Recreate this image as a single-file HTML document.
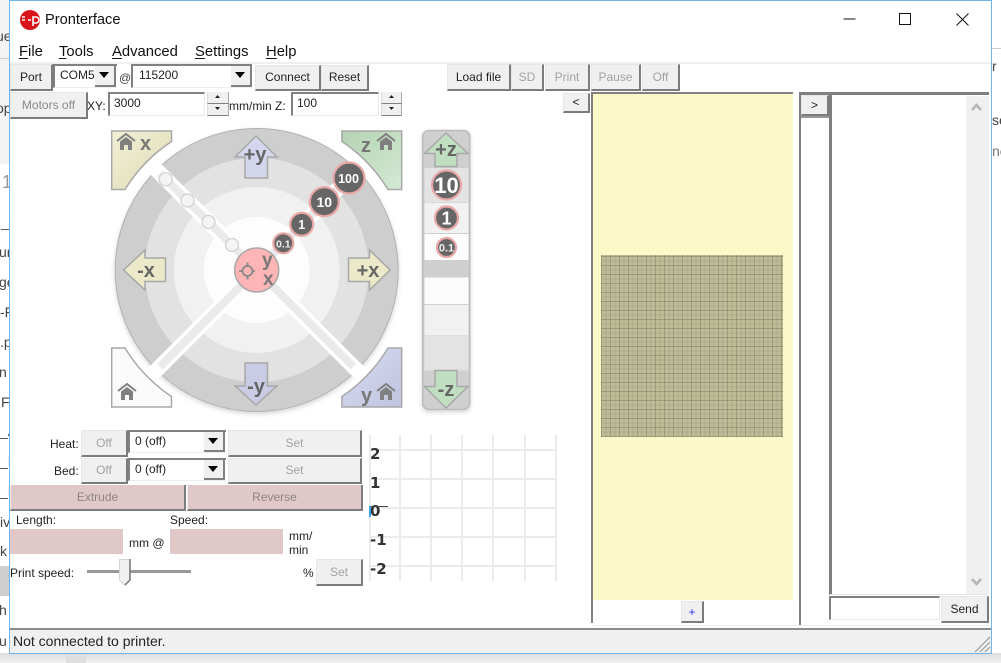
<!DOCTYPE html>
<html><head><meta charset="utf-8"><style>
html,body{margin:0;padding:0;width:1001px;height:663px;overflow:hidden;background:#f2f2f2}
body{position:relative;font:12px "Liberation Sans",sans-serif;color:#222}
div,span{position:absolute;box-sizing:border-box}
.t{white-space:nowrap;line-height:14px}
.o{font-size:14px;color:#444;white-space:nowrap;line-height:16px}
.m{font-size:14.8px;color:#111;white-space:nowrap;line-height:18px}
.m u{text-decoration:underline;text-underline-offset:2px}
.b{background:#f0f0f0;border:1px solid #e6e6e6;border-right:2px solid #7c7c7c;border-bottom:2px solid #7c7c7c;text-align:center;white-space:nowrap;color:#222;font-size:12px}
.d{color:#a2a2a2}
.c{background:#fff;border-top:2px solid #808080;border-left:2px solid #808080;border-bottom:1px solid #eee;font-size:12px;padding:2px 0 0 5px;white-space:nowrap;line-height:14px}
.a{background:#f0f0f0;border-right:2px solid #808080;border-bottom:2px solid #808080}
.a:after{content:"";position:absolute;left:4px;top:6px;border:5px solid transparent;border-top:6px solid #000;border-bottom:0}
.i{background:#fff;border-top:2px solid #808080;border-left:2px solid #808080;border-right:1px solid #e8e8e8;border-bottom:1px solid #e8e8e8;font-size:12px;padding:2px 0 0 4px;line-height:14px}
.s{background:#f0f0f0;border-right:1px solid #aaa;border-bottom:1px solid #808080;border-left:1px solid #ddd}
.r{background:#e0c8c8;border-right:2px solid #7c7c7c;border-bottom:2px solid #7c7c7c;border-left:1px solid #eee;color:#8f8484;text-align:center;font-size:12px;line-height:24px}
.p{background:#e0c8c8}
.gv{background:#ebebeb;width:1.5px;top:435px;height:146px}
.gh{background:#ebebeb;height:1.5px;left:369px;width:187px}
.g{font:bold 15px "DejaVu Sans",sans-serif;color:#333;line-height:16px;white-space:nowrap}
</style></head><body>
<div style="left:0;top:0;width:1001px;height:663px;filter:blur(.3px)">
<div style="left:0;top:0;width:10px;height:653px;background:#f3f3f3"></div>
<div style="left:0;top:58px;width:10px;height:1px;background:#ccc"></div>
<div style="left:0;top:164px;width:10px;height:499px;background:#fff"></div>
<div style="left:0;top:566px;width:10px;height:30px;background:#cfcfcf"></div>
<div style="left:991px;top:0;width:10px;height:663px;background:#fff"></div>
<div style="left:991px;top:48px;width:10px;height:1px;background:#ccc"></div>
<div style="left:0;top:653px;width:1001px;height:10px;background:linear-gradient(#dcdcdc,#f2f2f2)"></div>
<div style="left:66px;top:653px;width:20px;height:10px;background:#dedede"></div>
<div class="o" style="left:-4px;top:28px;width:14px;overflow:hidden">ue</div>
<div class="o" style="left:-4px;top:100px;width:14px;overflow:hidden">op</div>
<div class="o" style="left:2px;top:174px;font-size:18px;color:#999">1</div>
<div style="left:0;top:0;width:10px;height:653px;overflow:hidden">
<div class="o" style="left:1px;top:214px">_t</div><div class="o" style="left:-1px;top:244px">ur</div><div class="o" style="left:-1px;top:274px">ge</div><div class="o" style="left:0;top:304px">-F</div><div class="o" style="left:0;top:334px">.p</div><div class="o" style="left:-1px;top:364px">n</div><div class="o" style="left:1px;top:394px">Fi</div><div class="o" style="left:0;top:423px">_A</div><div class="o" style="left:0;top:453px">_D</div><div class="o" style="left:0;top:483px">_D</div><div class="o" style="left:0;top:514px">iv</div><div class="o" style="left:0;top:543px">k</div><div class="o" style="left:-1px;top:602px">h</div><div class="o" style="left:-1px;top:633px">u</div></div>
<div class="o" style="left:992px;top:58px">r</div><div class="o" style="left:992px;top:112px">sé</div><div class="o" style="left:992px;top:143px;color:#777">ne</div>

<!-- window -->
<div style="left:9px;top:0;width:983px;height:654px;background:#fff;border:1px solid #6db5ec"></div>
<svg style="position:absolute;left:19px;top:9px" width="22" height="22" viewBox="0 0 22 22"><circle cx="11" cy="11" r="10" fill="#d8131b"/><path d="M3 8h3M3 11h3M9 11h3" stroke="#fff" stroke-width="1.400"/><path d="M14 17V8h3a2.500 2.500 0 010 6h-3" fill="none" stroke="#fff" stroke-width="1.600"/></svg>
<div class="t" style="left:45px;top:11px;font-size:14.6px;line-height:18px;color:#111">Pronterface</div>
<svg style="position:absolute;left:840px;top:8px" width="135" height="22"><path d="M3.500 11h12" stroke="#111" fill="none"/><rect x="59.500" y="5.500" width="11" height="11" fill="none" stroke="#111"/><path d="M116.500 5.500l12 12M128.500 5.500l-12 12" stroke="#111" fill="none"/></svg>
<div class="m" style="left:19px;top:43px"><u>F</u>ile</div>
<div class="m" style="left:59px;top:43px"><u>T</u>ools</div>
<div class="m" style="left:112px;top:43px"><u>A</u>dvanced</div>
<div class="m" style="left:195px;top:43px"><u>S</u>ettings</div>
<div class="m" style="left:266px;top:43px"><u>H</u>elp</div>
<div style="left:10px;top:62px;width:981px;height:2px;background:#f0f0f0"></div>

<!-- top rows -->
<div class="b" style="left:10px;top:64px;width:43px;height:27px;line-height:25px">Port</div>
<div class="c" style="left:53px;top:64px;width:64px;height:24px;padding-left:5px;overflow:hidden">COM5</div>
<div class="a" style="left:95px;top:66px;width:21px;height:21px"></div>
<div class="t" style="left:119px;top:71px;color:#444">@</div>
<div class="c" style="left:131px;top:64px;width:121px;height:24px;padding-left:6px">115200</div>
<div class="a" style="left:231px;top:66px;width:21px;height:21px"></div>
<div class="b" style="left:255px;top:65px;width:66px;height:26px;line-height:23px">Connect</div>
<div class="b" style="left:321px;top:65px;width:48px;height:26px;line-height:23px">Reset</div>
<div class="b d" style="left:10px;top:92px;width:78px;height:27px;line-height:25px;color:#8a8a8a">Motors off</div>
<div class="t" style="left:87px;top:99px">XY:</div>
<div class="i" style="left:108px;top:92px;width:97px;height:24px">3000</div>
<div class="s" style="left:207px;top:92px;width:22px;height:12px"><svg width="20" height="10" style="position:absolute;left:0;top:0"><path d="M7 6h5l-2.500-3z" fill="#222"/></svg></div>
<div class="s" style="left:207px;top:104px;width:22px;height:12px"><svg width="20" height="10" style="position:absolute;left:0;top:0"><path d="M7 3h5l-2.500 3z" fill="#222"/></svg></div>
<div class="t" style="left:229px;top:99px">mm/min Z:</div>
<div class="i" style="left:291px;top:92px;width:88px;height:24px">100</div>
<div class="s" style="left:381px;top:92px;width:21px;height:12px"><svg width="20" height="10" style="position:absolute;left:0;top:0"><path d="M7 6h5l-2.500-3z" fill="#222"/></svg></div>
<div class="s" style="left:381px;top:104px;width:21px;height:12px"><svg width="20" height="10" style="position:absolute;left:0;top:0"><path d="M7 3h5l-2.500 3z" fill="#222"/></svg></div>

<div class="b" style="left:447px;top:64px;width:64px;height:27px;line-height:25px">Load file</div>
<div class="b d" style="left:511px;top:64px;width:33px;height:27px;line-height:25px">SD</div>
<div class="b d" style="left:545px;top:64px;width:45px;height:27px;line-height:25px">Print</div>
<div class="b d" style="left:591px;top:64px;width:50px;height:27px;line-height:25px">Pause</div>
<div class="b d" style="left:642px;top:64px;width:38px;height:27px;line-height:25px">Off</div>
<div class="b" style="left:563px;top:93px;width:27px;height:20px;line-height:17px">&lt;</div>

<!-- jog -->
<svg style="position:absolute;left:100px;top:120px" width="380" height="300" viewBox="100 120 380 300" font-family="'Liberation Sans',sans-serif" font-weight="bold">
<defs>
<filter id="sh" x="-20%" y="-20%" width="140%" height="140%"><feDropShadow dx="0" dy="2" stdDeviation="2.500" flood-color="#000" flood-opacity=".16"/></filter>
<linearGradient id="tl" x1="0" y1="0" x2="1" y2="1"><stop offset="0" stop-color="#f2f0d6"/><stop offset="1" stop-color="#dedbb5"/></linearGradient>
<linearGradient id="tr" x1="0" y1="0" x2="1" y2="1"><stop offset="0" stop-color="#b4d3b2"/><stop offset="1" stop-color="#d4ead4"/></linearGradient>
<linearGradient id="br" x1="0" y1="0" x2="1" y2="1"><stop offset="0" stop-color="#d8dcf2"/><stop offset="1" stop-color="#bfc3de"/></linearGradient>
<g id="h"><path d="M0 7L9 0l9 7" fill="none" stroke="#808080" stroke-width="2"/><path d="M3 7.500L9 3l6 4.500V16h-4v-5H7v5H3z" fill="#808080"/></g>
</defs>
<g filter="url(#sh)">
<circle cx="256.700" cy="270" r="141.500" fill="#cecece" stroke="#b2b2b2" stroke-width="1"/>
<circle cx="256.700" cy="270" r="112" fill="#e2e2e2"/>
<circle cx="256.700" cy="270" r="83" fill="#f1f1f1"/>
<circle cx="256.700" cy="270" r="53" fill="#fdfdfd"/>
</g>
<path d="M152 165.300L361.400 374.700M361.400 165.300L152 374.700" stroke="#fff" stroke-width="15"/>
<path d="M160 173.300L353.400 366.700M353.400 173.300L160 366.700" stroke="#eaeaea" stroke-width="8"/>
<g fill="#f4f4f4" stroke="#cfcfcf" stroke-width="1.200"><circle cx="165.700" cy="179.300" r="6.500"/><circle cx="187.500" cy="200.500" r="6.500"/><circle cx="208.500" cy="222" r="6.500"/><circle cx="232" cy="245" r="6.500"/></g>
<!-- corners -->
<g stroke="#a8a8a8" stroke-width="1.500">
<path d="M111.700 131H171.500V141.500A154 154 0 0 0 125 189.500H111.700Z" fill="url(#tl)"/>
<path d="M401.700 131H341.900V141.500A154 154 0 0 1 388 189.500H401.700Z" fill="url(#tr)"/>
<path d="M111.700 348H125A154 154 0 0 0 171.500 396.500V407H111.700Z" fill="#fbfbfb"/>
<path d="M401.700 348H388A154 154 0 0 1 341.900 396.500V407H401.700Z" fill="url(#br)"/>
</g>
<use href="#h" x="117" y="134"/><use href="#h" x="377" y="134"/><use href="#h" x="118" y="384"/><use href="#h" x="377" y="384"/>
<g fill="#777" font-size="20"><text x="140" y="150">x</text><text x="361" y="152">z</text><text x="361" y="402">y</text></g>
<!-- arrows -->
<g stroke="#a8a8a8" stroke-width="1.500">
<path d="M256 136L277 157H267.500V178H245V157H235Z" fill="#d3d6ec"/>
<path d="M256 405L277 386H267.500V363H245V386H235Z" fill="#c9cce4"/>
<path d="M123.500 270L145 250V258H165.500V281.500H145V290Z" fill="#ece9c8"/>
<path d="M390 270L369.500 250V258H348.500V281.500H369.500V290Z" fill="#ece9c8"/>
</g>
<g fill="#666" text-anchor="middle" font-size="20"><text x="255" y="161">+y</text><text x="256" y="393">-y</text><text x="146" y="277">-x</text><text x="368" y="277">+x</text></g>
<!-- center -->
<circle cx="256.700" cy="270" r="22" fill="#fdb5b5" stroke="#a9a9a9" stroke-width="1.500"/>
<g stroke="#888" stroke-width="1.800" fill="none"><circle cx="247.500" cy="271" r="5"/><path d="M247.500 262.500v4M247.500 275.500v4M239 271h4M252 271h3"/></g>
<text x="262" y="266" fill="#777" font-size="19">y</text><text x="263" y="285" fill="#777" font-size="19">x</text>
<!-- steps -->
<g fill="#666" stroke="#e9a8a8" stroke-width="2.200"><circle cx="349" cy="178" r="15.500"/><circle cx="324.300" cy="201.700" r="14.500"/><circle cx="301.700" cy="224.300" r="11.500"/><circle cx="283.300" cy="243.300" r="10"/></g>
<g fill="#fff" text-anchor="middle"><text x="348.500" y="183" font-size="12.500">100</text><text x="324.300" y="207" font-size="14">10</text><text x="301.700" y="229" font-size="12.500">1</text><text x="283.300" y="247.500" font-size="10.500" fill="#f0f0f0">0.1</text></g>
<!-- z -->
<rect x="422.700" y="130.500" width="47" height="279" rx="6" fill="#cfcfcf" stroke="#bcbcbc" stroke-width="1.500" filter="url(#sh)"/>
<rect x="424.500" y="168" width="44" height="34.500" fill="#e3e3e3"/>
<rect x="424.500" y="203" width="44" height="30" fill="#f1f1f1"/>
<rect x="424.500" y="234" width="44" height="26" fill="#fdfdfd"/>
<rect x="424.500" y="277.500" width="44" height="26.500" fill="#fcfcfc"/>
<rect x="424.500" y="305" width="44" height="30.500" fill="#f1f1f1"/>
<rect x="424.500" y="336" width="44" height="34.500" fill="#e3e3e3"/>
<g stroke="#a8a8a8" stroke-width="1.500" fill="#c0dfc0">
<path d="M446 133L468 153.500H457V166.500H435V153.500H424.500Z"/>
<path d="M446 408L468 386.500H457V370.500H435V386.500H424.500Z"/>
</g>
<g fill="#666" text-anchor="middle" font-size="20"><text x="446" y="156">+z</text><text x="446" y="396">-z</text></g>
<g fill="#666" stroke="#e9a8a8" stroke-width="2.200"><circle cx="446.500" cy="185" r="14.500"/><circle cx="446.500" cy="218" r="11.500"/><circle cx="446.500" cy="247.500" r="9.500"/></g>
<g fill="#fff" text-anchor="middle"><text x="446.500" y="193" font-size="22">10</text><text x="446.500" y="224.500" font-size="18">1</text><text x="446.500" y="251.500" font-size="11" fill="#eee">0.1</text></g>
</svg>

<!-- temps -->
<div class="t" style="left:50px;top:437px">Heat:</div>
<div class="b d" style="left:81px;top:430px;width:47px;height:27px;line-height:24px">Off</div>
<div class="c" style="left:128px;top:430px;width:98px;height:23px;padding-left:5px">0 (off)</div>
<div class="a" style="left:204px;top:432px;width:21px;height:20px"></div>
<div class="b d" style="left:228px;top:430px;width:134px;height:27px;line-height:24px">Set</div>
<div class="t" style="left:54px;top:464px">Bed:</div>
<div class="b d" style="left:81px;top:458px;width:47px;height:26px;line-height:23px">Off</div>
<div class="c" style="left:128px;top:458px;width:98px;height:23px;padding-left:5px">0 (off)</div>
<div class="a" style="left:204px;top:460px;width:21px;height:20px"></div>
<div class="b d" style="left:228px;top:458px;width:134px;height:26px;line-height:23px">Set</div>
<div class="r" style="left:10px;top:485px;width:176px;height:26px">Extrude</div>
<div class="r" style="left:187px;top:485px;width:176px;height:26px">Reverse</div>
<div class="t" style="left:16px;top:513px">Length:</div>
<div class="t" style="left:170px;top:513px">Speed:</div>
<div class="p" style="left:10px;top:529px;width:113px;height:25px"></div>
<div class="t" style="left:129px;top:536px">mm @</div>
<div class="p" style="left:170px;top:529px;width:113px;height:25px"></div>
<div class="t" style="left:289px;top:529px">mm/</div>
<div class="t" style="left:289px;top:543px">min</div>
<div class="t" style="left:10px;top:566px">Print speed:</div>
<div style="left:87px;top:570px;width:104px;height:3px;background:#999"></div>
<svg style="position:absolute;left:118px;top:558px" width="15" height="30"><path d="M1.500 1.500H11.500V22L6.500 27L1.500 22Z" fill="#f0f0f0" stroke="#d5d5d5"/><path d="M12 1V22L7 27" fill="none" stroke="#777" stroke-width="1.500"/></svg>
<div class="t" style="left:303px;top:566px">%</div>
<div class="b d" style="left:316px;top:559px;width:47px;height:27px;line-height:25px">Set</div>

<!-- graph -->
<div class="gv" style="left:369px"></div><div class="gv" style="left:399px"></div><div class="gv" style="left:430px"></div><div class="gv" style="left:461px"></div><div class="gv" style="left:492px"></div><div class="gv" style="left:524px"></div><div class="gv" style="left:555px"></div>
<div class="gh" style="top:449px"></div><div class="gh" style="top:478px"></div><div class="gh" style="top:507px"></div><div class="gh" style="top:536px"></div><div class="gh" style="top:565px"></div>
<div class="g" style="left:370px;top:446px">2</div>
<div class="g" style="left:370px;top:475px">1</div>
<div class="g" style="left:370px;top:503px">0</div>
<div style="left:370px;top:506px;width:18px;height:1px;background:#444"></div>
<div style="left:369px;top:506px;width:2px;height:11px;background:#3aa0e8"></div>
<div class="g" style="left:370px;top:532px">-1</div>
<div class="g" style="left:370px;top:561px">-2</div>

<!-- preview -->
<div style="left:591px;top:92px;width:2px;height:531px;background:#808080"></div>
<div style="left:593px;top:92px;width:200px;height:2px;background:#808080"></div>
<div style="left:593px;top:94px;width:200px;height:506px;background:#faf9c7"></div>
<div style="left:601px;top:255px;width:182px;height:182px;background-color:#bcbc98;background-image:repeating-linear-gradient(90deg,rgba(90,90,60,.32) 0 1px,transparent 1px 4.500px,rgba(90,90,60,.14) 4.500px 5.500px,transparent 5.500px 9px),repeating-linear-gradient(0deg,rgba(90,90,60,.32) 0 1px,transparent 1px 4.500px,rgba(90,90,60,.14) 4.500px 5.500px,transparent 5.500px 9px)"></div>
<div class="b" style="left:681px;top:601px;width:23px;height:22px;line-height:20px;color:#3333ff">+</div>

<!-- log -->
<div style="left:799px;top:92px;width:2px;height:533px;background:#808080"></div>
<div style="left:799px;top:92px;width:190px;height:3px;background:#808080"></div>
<div style="left:829px;top:95px;width:3px;height:500px;background:#808080"></div>
<div class="b" style="left:801px;top:95px;width:28px;height:21px;line-height:18px">&gt;</div>
<div style="left:801px;top:116px;width:28px;height:1.500px;background:#999"></div>
<div style="left:966px;top:96px;width:21px;height:498px;background:#f0f0f0"></div>
<svg style="position:absolute;left:966px;top:96px" width="21" height="498"><path d="M6 14l4.500-5 4.500 5" fill="none" stroke="#b5b5b5" stroke-width="2.500"/><path d="M6 483l4.500 5 4.500-5" fill="none" stroke="#b5b5b5" stroke-width="2.500"/></svg>
<div style="left:987px;top:96px;width:2px;height:530px;background:#eee"></div>
<div style="left:830px;top:594px;width:157px;height:1px;background:#e6e6e6"></div>
<div class="i" style="left:829px;top:596px;width:111px;height:24px;border-top:2px solid #808080"></div>
<div class="b" style="left:941px;top:596px;width:48px;height:27px;line-height:24px">Send</div>
<div style="left:593px;top:625px;width:395px;height:1px;background:#eee"></div>

<!-- status -->
<div style="left:10px;top:628px;width:981px;height:1.500px;background:#8c8c8c"></div>
<div style="left:10px;top:630px;width:981px;height:23px;background:#f0f0f0"></div>
<div class="t" style="left:13px;top:632px;font-size:14px;line-height:18px;color:#222">Not connected to printer.</div>
<svg style="position:absolute;left:973px;top:635px" width="18" height="18"><path d="M2 17L17 2M7 17L17 7M12 17L17 12" stroke="#9a9a9a" stroke-width="1.200" fill="none"/></svg>
</div>
</body></html>
